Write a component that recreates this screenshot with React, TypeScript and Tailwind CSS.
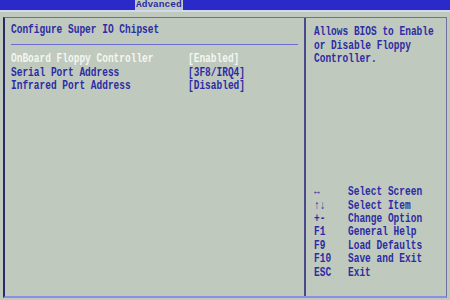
const BLUE = "text-[#2c2ca6]";
const TALL = "inline-block scale-y-[1.3] origin-center whitespace-pre";

const legend: [string, string][] = [
  ["↔", "Select Screen"],
  ["↑↓", "Select Item"],
  ["+-", "Change Option"],
  ["F1", "General Help"],
  ["F9", "Load Defaults"],
  ["F10", "Save and Exit"],
  ["ESC", "Exit"],
];

const items = [
  { label: "OnBoard Floppy Controller", value: "[Enabled]", active: true },
  { label: "Serial Port Address", value: "[3F8/IRQ4]", active: false },
  { label: "Infrared Port Address", value: "[Disabled]", active: false },
];

export default function App() {
  return (
    <div
      className="w-[450px] h-[300px] bg-[#c0c9bd] flex flex-col overflow-hidden text-[9.5px] font-bold"
      style={{ fontFamily: '"Liberation Mono", "DejaVu Sans Mono", monospace' }}
    >
      {/* Top menu bar */}
      <div className="h-[10px] bg-[#2a2acb] flex">
        <div className={`ml-[135px] h-full bg-[#c0c9bd] ${BLUE} leading-[10px] px-[1px] whitespace-nowrap`}>
          Advanced
        </div>
      </div>
      <div className="h-[2px] bg-[#d3daf0]" />
      <div className="h-[5px]" />

      {/* Main frame */}
      <div className="flex ml-[3px] mr-[3px] h-[281px] border-l-2 border-t border-r border-b-2 border-l-[#2a2a66] border-t-[#6d6f9c] border-r-[#6d6f9c] border-b-[#8d8de6]">
        <div className="w-[301px] border-r-2 border-r-[#4a4a8a] pl-[6px] pr-[6px] pt-[5px]">
          <div className={`${BLUE} h-[14px] leading-[14px]`}>
            <span className={TALL}>Configure Super IO Chipset</span>
          </div>
          <div className="mt-[7px] h-px bg-[#6b6bd0]" />
          <div className="mt-[7px] flex flex-col">
            {items.map((it) => (
              <div
                key={it.label}
                className={`flex h-[13.5px] leading-[13.5px] ${it.active ? "text-[#f4f6f2]" : BLUE}`}
              >
                <span className="w-[177px]">
                  <span className={TALL}>{it.label}</span>
                </span>
                <span className={TALL}>{it.value}</span>
              </div>
            ))}
          </div>
        </div>

        <div className="flex-1 flex flex-col pl-[8px] pt-[7px] pb-[17px]">
          <div className={`${BLUE} leading-[13.5px] flex flex-col`}>
            <span className={TALL}>Allows BIOS to Enable</span>
            <span className={TALL}>or Disable Floppy</span>
            <span className={TALL}>Controller.</span>
          </div>
          <div className="flex-1" />
          <div className={`${BLUE} flex flex-col`}>
            {legend.map(([k, d]) => (
              <div key={d} className="flex h-[13.4px] leading-[13.4px]">
                <span className="w-[34px]">
                  <span className={TALL}>{k}</span>
                </span>
                <span className={TALL}>{d}</span>
              </div>
            ))}
          </div>
        </div>
      </div>
    </div>
  );
}
